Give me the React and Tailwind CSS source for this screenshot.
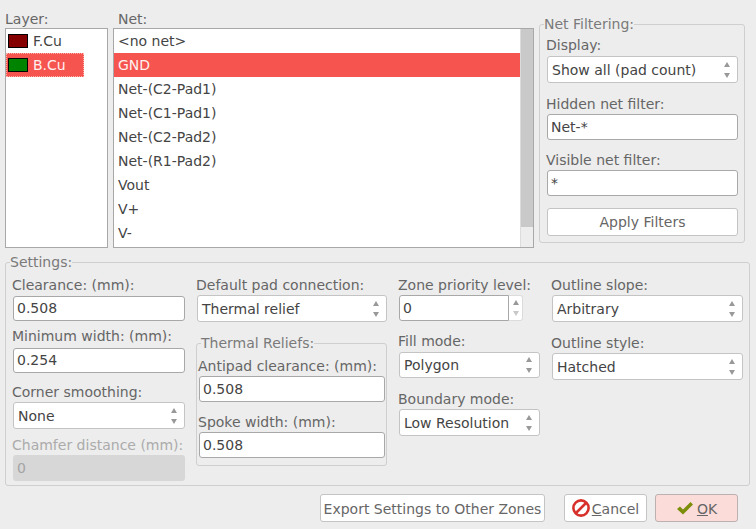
const FONT = "font-['DejaVu_Sans',sans-serif]";

const nets = ["<no net>", "GND", "Net-(C2-Pad1)", "Net-(C1-Pad1)", "Net-(C2-Pad2)", "Net-(R1-Pad2)", "Vout", "V+", "V-"];

function Label({ children, className = "" }) {
  return <div className={`h-[17px] leading-[17px] whitespace-nowrap text-[#666666] ${className}`}>{children}</div>;
}

function Arrows({ light = false }) {
  return (
    <svg width="6" height="16" viewBox="0 0 6 16" className="shrink-0">
      <path d="M3 0 L6 5 L0 5 Z" fill="#999999" />
      <path d="M0 11 L6 11 L3 16 Z" fill={light ? "#c8c8c8" : "#999999"} />
    </svg>
  );
}

function Select({ value, className = "" }) {
  return (
    <div className={`bg-white border border-[#c4c4c4] rounded-[3px] flex items-center justify-between pl-[4px] pr-[7px] text-[#444444] ${className}`}>
      <span className="whitespace-nowrap pt-[1px]">{value}</span>
      <Arrows />
    </div>
  );
}

function Input({ value, className = "" }) {
  return (
    <div className={`bg-white border border-[#a8a8a8] rounded-[3px] flex items-center pl-[3px] text-[#444444] ${className}`}>
      {value}
    </div>
  );
}

function Group({ title, className = "", legendClass = "", children }) {
  return (
    <fieldset className={`border border-[#cfcfcf] rounded-[3px] ${className}`}>
      <legend className={`leading-[17px] text-[#7a7a7a] ${legendClass}`}>{title}</legend>
      {children}
    </fieldset>
  );
}

function LayerRow({ name, color, selected }) {
  return (
    <div className={`h-[24px] flex items-center ${selected ? "pl-[1px] bg-[#f5544f] text-[#fff0ee] border border-dotted border-[#ffb0a8] w-[78px]" : "pl-[2px] text-[#444444]"}`}>
      <span className="w-[20px] h-[14px] border border-black mr-[5px] shrink-0" style={{ backgroundColor: color }} />
      {name}
    </div>
  );
}

export default function App() {
  return (
    <div className={`${FONT} w-[756px] h-[529px] bg-[#ededed] text-[14px] overflow-hidden flex flex-col`}>
      {/* Top part */}
      <div className="flex gap-[5px] px-[5px] pt-[11px] h-[248px]">
        <div className="w-[103px] flex flex-col">
          <Label>Layer:</Label>
          <div className="flex-1 bg-white border border-[#a8a8a8]">
            <LayerRow name="F.Cu" color="#840000" />
            <LayerRow name="B.Cu" color="#008400" selected />
          </div>
        </div>

        <div className="w-[421px] flex flex-col">
          <Label className="ml-[5px]">Net:</Label>
          <div className="flex-1 bg-white border border-[#a8a8a8] flex">
            <div className="flex-1 min-w-0">
              {nets.map((net) => (
                <div
                  key={net}
                  className={`h-[24px] leading-[24px] pl-[4px] ${net === "GND" ? "bg-[#f5544f] text-[#fff0ee]" : "text-[#444444]"}`}
                >
                  {net}
                </div>
              ))}
            </div>
            <div className="w-[13px] flex flex-col bg-[#ededed] border-l border-[#dcdcdc]">
              <div className="h-[198px] bg-[#c9c9c9]" />
            </div>
          </div>
        </div>

        <Group title="Net Filtering:" legendClass="-ml-[3px]" className="w-[206px] h-[227px] mt-[5px] pl-[7px] pr-[6px]">
          <Label className="mt-[4px] -ml-[1px]">Display:</Label>
          <Select value="Show all (pad count)" className="mt-[2px] h-[27px]" />
          <Label className="mt-[13px] -ml-[1px]">Hidden net filter:</Label>
          <Input value="Net-*" className="mt-[1px] h-[26px]" />
          <Label className="mt-[12px] -ml-[1px]">Visible net filter:</Label>
          <Input value="*" className="mt-[1px] h-[26px]" />
          <button className="w-full h-[28px] mt-[12px] bg-white border border-[#c4c4c4] rounded-[3px] text-[#666666]">
            Apply Filters
          </button>
        </Group>
      </div>

      {/* Settings */}
      <Group title="Settings:" legendClass="-ml-[3px]" className="w-[745px] h-[232px] ml-[5px] mt-[6px] pl-[7px] flex">
        <div className="flex gap-[12px]">
          <div className="w-[172px]">
            <Label className="mt-[6px] -ml-[1px]">Clearance: (mm):</Label>
            <Input value="0.508" className="mt-[2px] h-[25px]" />
            <Label className="mt-[7px] -ml-[1px]">Minimum width: (mm):</Label>
            <Input value="0.254" className="mt-[3px] h-[25px]" />
            <Label className="mt-[11px] -ml-[1px]">Corner smoothing:</Label>
            <Select value="None" className="mt-[1px] h-[27px]" />
            <Label className="mt-[8px] -ml-[1px] !text-[#ababab]">Chamfer distance (mm):</Label>
            <div className="h-[26px] mt-[1px] bg-[#d7d7d7] rounded-[3px] flex items-center pl-[4px] text-[#a4a4a4]">0</div>
          </div>

          <div className="w-[190px]">
            <Label className="mt-[6px] -ml-[1px]">Default pad connection:</Label>
            <Select value="Thermal relief" className="mt-[1px] h-[27px]" />
            <Group title="Thermal Reliefs:" legendClass="ml-[2px]" className="h-[131px] mt-[13px] -ml-[1px] pl-[2px] pr-[1px]">
              <Label className="mt-[6px] -ml-[1px]">Antipad clearance: (mm):</Label>
              <Input value="0.508" className="mt-[1px] h-[26px]" />
              <Label className="mt-[12px] -ml-[1px]">Spoke width: (mm):</Label>
              <Input value="0.508" className="mt-[1px] h-[26px]" />
            </Group>
          </div>

          <div className="w-[141px]">
            <Label className="mt-[6px] -ml-[1px]">Zone priority level:</Label>
            <div className="flex mt-[1px] h-[26px] w-[124px]">
              <div className="flex-1 bg-white border border-[#a8a8a8] rounded-l-[3px] flex items-center pl-[3px] text-[#444444]">0</div>
              <div className="w-[14px] bg-white border border-l-0 border-[#dcdcdc] rounded-r-[3px] flex items-center justify-center">
                <Arrows light />
              </div>
            </div>
            <Label className="mt-[12px] -ml-[1px]">Fill mode:</Label>
            <Select value="Polygon" className="mt-[2px] h-[26px]" />
            <Label className="mt-[13px] -ml-[1px]">Boundary mode:</Label>
            <Select value="Low Resolution" className="mt-[1px] h-[27px]" />
          </div>

          <div className="w-[191px]">
            <Label className="mt-[6px] -ml-[1px]">Outline slope:</Label>
            <Select value="Arbitrary" className="mt-[1px] h-[27px]" />
            <Label className="mt-[13px] -ml-[1px]">Outline style:</Label>
            <Select value="Hatched" className="mt-[1px] h-[27px]" />
          </div>
        </div>
      </Group>

      {/* Bottom buttons */}
      <div className="flex mt-[8px] pl-[320px] h-[28px] text-[#666666]">
        <button className="w-[225px] pt-[2px] bg-white border border-[#c4c4c4] rounded-[3px] whitespace-nowrap">
          Export Settings to Other Zones
        </button>
        <button className="w-[83px] ml-[19px] bg-white border border-[#c4c4c4] rounded-[3px] flex items-center justify-center gap-[2px]">
          <svg width="18" height="18" viewBox="0 0 18 18">
            <circle cx="9" cy="9" r="7.6" fill="none" stroke="#d8312c" strokeWidth="2.6" />
            <path d="M4 14 L14 4" stroke="#d8312c" strokeWidth="2.6" />
          </svg>
          <span className="pt-[2px]"><span className="underline">C</span>ancel</span>
        </button>
        <button className="w-[83px] ml-[8px] bg-[#fbdcd9] border border-[#bdb0ae] rounded-[3px] flex items-center justify-center gap-[3px]">
          <svg width="18" height="14" viewBox="0 0 18 14">
            <path d="M1 8 L4 5.5 L7 8.5 L14.5 1 L17 3.5 L7 13.5 Z" fill="#7d8f0a" />
          </svg>
          <span className="pt-[2px]"><span className="underline">O</span>K</span>
        </button>
      </div>
    </div>
  );
}
